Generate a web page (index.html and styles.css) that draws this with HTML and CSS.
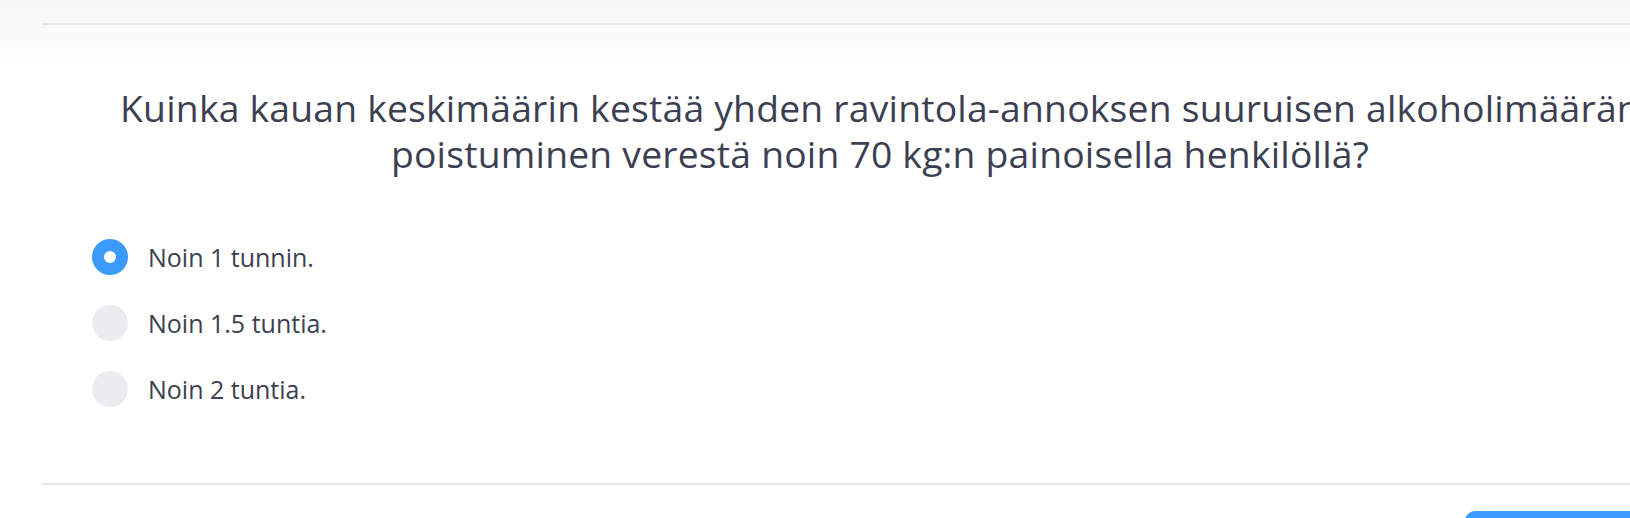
FILE: index.html
```html
<!DOCTYPE html>
<html lang="fi">
<head>
<meta charset="utf-8">
<title>Kysymys</title>
<link rel="stylesheet" href="styles.css">
</head>
<body>
<div class="page">
  <div class="quiz">
    <div class="rule"></div>
    <h2 class="question">Kuinka kauan keskimäärin kestää yhden ravintola-annoksen suuruisen alkoholimäärän poistuminen verestä noin 70 kg:n painoisella henkilöllä?</h2>
    <ul class="options">
      <li class="option selected"><span class="radio"></span><span class="label">Noin 1 tunnin.</span></li>
      <li class="option"><span class="radio"></span><span class="label">Noin 1.5 tuntia.</span></li>
      <li class="option"><span class="radio"></span><span class="label">Noin 2 tuntia.</span></li>
    </ul>
    <div class="rule"></div>
    <div class="footer">
      <button class="next" type="button"></button>
    </div>
  </div>
</div>
</body>
</html>
```
FILE: styles.css
```css
html, body {
  margin: 0;
  padding: 0;
}
body {
  width: 1630px;
  height: 518px;
  overflow: hidden;
  background: linear-gradient(to bottom, #f6f6f7 0, #fdfdfd 55px, #ffffff 80px) no-repeat;
  font-family: "Open Sans", "DejaVu Sans", sans-serif;
  color: #3c3f51;
}
.page {
  padding-top: 23px;
  padding-left: 42px;
}
.quiz {
  width: 1676px;
}
.rule {
  height: 2px;
  background: #e7e7e9;
}
.question {
  margin: 60px 0 0;
  font-size: 37.3px;
  font-weight: 400;
  letter-spacing: 0.2px;
  line-height: 46px;
  text-align: center;
  color: #3c3f51;
}
.options {
  list-style: none;
  margin: 0;
  padding: 62px 0 76px 50px;
  display: flex;
  flex-direction: column;
  gap: 30px;
}
.option {
  display: flex;
  align-items: center;
  gap: 20px;
  height: 36px;
}
.radio {
  width: 36px;
  height: 36px;
  border-radius: 50%;
  background: #ebecf1;
  flex: none;
  display: flex;
  align-items: center;
  justify-content: center;
}
.option.selected .radio {
  background: #3a9bfc;
}
.option.selected .radio::after {
  content: "";
  width: 12px;
  height: 12px;
  border-radius: 50%;
  background: #fff;
}
.label {
  font-size: 25px;
  line-height: 36px;
  color: #3c3f51;
}
.footer {
  display: flex;
  padding-top: 26px;
  padding-left: 1423px;
}
.next {
  width: 240px;
  height: 48px;
  border: none;
  border-radius: 10px;
  background: #3a9bfc;
}
```
